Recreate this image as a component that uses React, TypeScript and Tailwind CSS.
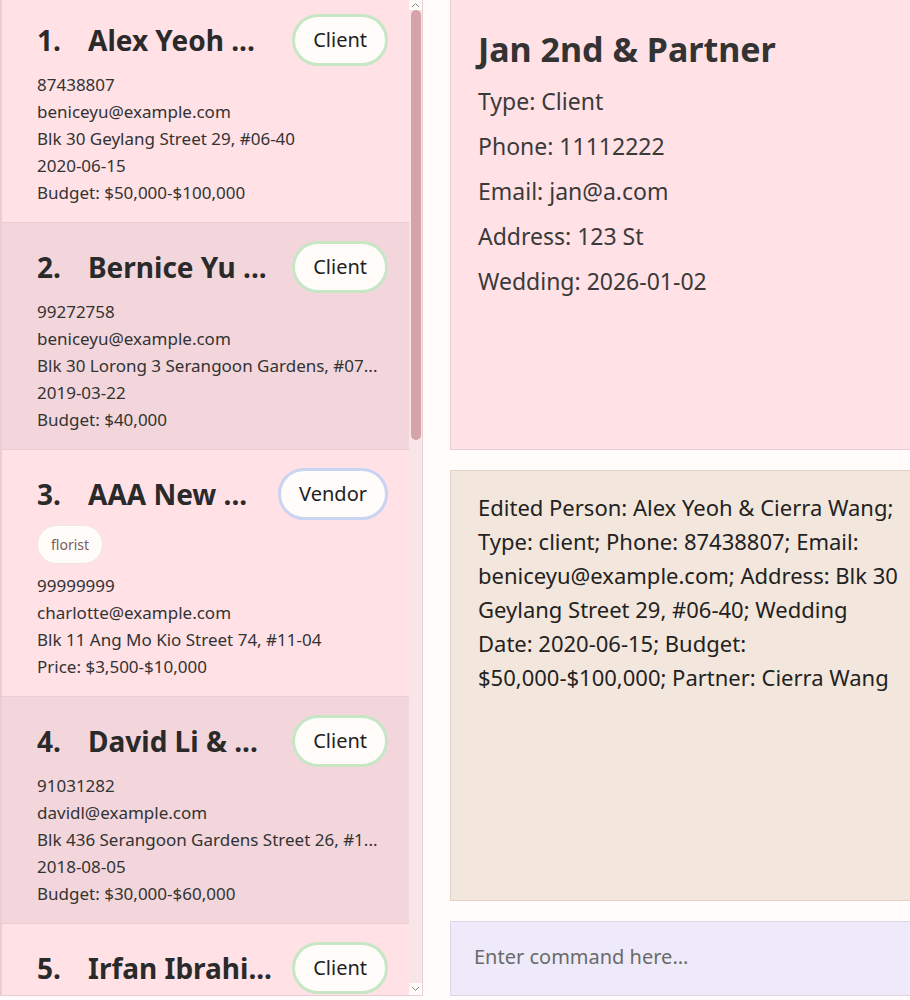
import React from "react";

type Person = {
  idx: number;
  name: string;
  type: "Client" | "Vendor";
  tags?: string[];
  lines: string[];
  alt?: boolean;
};

// card 5 is scrolled past the bottom edge, only its header shows
const people: Person[] = [
  {
    idx: 1,
    name: "Alex Yeoh ...",
    type: "Client",
    lines: ["87438807", "beniceyu@example.com", "Blk 30 Geylang Street 29, #06-40", "2020-06-15", "Budget: $50,000-$100,000"],
  },
  {
    idx: 2,
    name: "Bernice Yu ...",
    type: "Client",
    alt: true,
    lines: ["99272758", "beniceyu@example.com", "Blk 30 Lorong 3 Serangoon Gardens, #07...", "2019-03-22", "Budget: $40,000"],
  },
  {
    idx: 3,
    name: "AAA New ...",
    type: "Vendor",
    tags: ["florist"],
    lines: ["99999999", "charlotte@example.com", "Blk 11 Ang Mo Kio Street 74, #11-04", "Price: $3,500-$10,000"],
  },
  {
    idx: 4,
    name: "David Li & ...",
    type: "Client",
    alt: true,
    lines: ["91031282", "davidl@example.com", "Blk 436 Serangoon Gardens Street 26, #1...", "2018-08-05", "Budget: $30,000-$60,000"],
  },
  {
    idx: 5,
    name: "Irfan Ibrahi...",
    type: "Client",
    lines: [],
  },
];

const font = "font-['Noto_Sans',sans-serif]";

// ─── List card ────────────────────────────────────────────────────────────────

const TypeBadge: React.FC<{ type: Person["type"] }> = ({ type }) => {
  const border = type === "Client" ? "border-[#c6e6c6]" : "border-[#c9d3f2]";
  return (
    <span
      className={`shrink-0 inline-flex items-center justify-center h-[52px] px-[18px] rounded-full border-[3px] bg-[#fffcfa] text-[20px] text-[#222] ${border}`}
    >
      {type}
    </span>
  );
};

const PersonCard: React.FC<{ p: Person }> = ({ p }) => (
  <div
    className={`border-b border-[#ebcdd2] pl-[35px] pr-[21px] pt-[18px] pb-[16px] ${p.alt ? "bg-[#f2d6db]" : "bg-[#ffe1e6]"}`}
  >
    <div className="flex items-center justify-between h-[52px]">
      <div className="flex items-center text-[28px] font-bold text-[#2a2a2a] whitespace-nowrap">
        <span className="w-[51px]">{p.idx}.</span>
        <span>{p.name}</span>
      </div>
      <TypeBadge type={p.type} />
    </div>
    {p.tags && (
      <div className="flex gap-2 mt-[5px] mb-[8px]">
        {p.tags.map((t) => (
          <span
            key={t}
            className="inline-flex items-center h-[39px] px-[13px] rounded-full bg-[#fffcfa] border border-[#eee6e6] text-[14px] text-[#7a5c5c]"
          >
            {t}
          </span>
        ))}
      </div>
    )}
    {p.lines.length > 0 && (
      <div className="mt-[5px] flex flex-col text-[17px] leading-[27px] text-[#333]">
        {p.lines.map((l, i) => (
          <span key={i} className="whitespace-nowrap">
            {l}
          </span>
        ))}
      </div>
    )}
  </div>
);

// ─── Scrollbar (static drawing of the list's scroll state) ───────────────────

const FakeScrollbar: React.FC = () => (
  <div className="w-[13px] shrink-0 flex flex-col items-center bg-[#f8e5e8]">
    <div className="h-[10px] w-full bg-[#fffcfa] flex items-start justify-center text-[#888]">
      <svg width="9" height="6" viewBox="0 0 9 6" className="mt-[2px]">
        <path d="M1 5 L4.5 1.5 L8 5" fill="none" stroke="currentColor" strokeWidth="1" />
      </svg>
    </div>
    <div className="w-[10px] h-[430px] rounded-full bg-[#d5a4a8]" />
    <div className="flex-1 w-[10px] rounded-b-full" />
    <div className="h-[12px] w-full bg-[#fffcfa] flex items-center justify-center text-[#888]">
      <svg width="9" height="6" viewBox="0 0 9 6">
        <path d="M1 1 L4.5 4.5 L8 1" fill="none" stroke="currentColor" strokeWidth="1" />
      </svg>
    </div>
  </div>
);

// ─── App ──────────────────────────────────────────────────────────────────────

export default function App() {
  return (
    <div className={`w-[910px] h-[1000px] bg-[#fffcfb] flex ${font}`}>
      {/* Person list */}
      <div className="w-[423px] h-[996px] shrink-0 flex border-l-2 border-b border-r border-[#e9cfd3] overflow-hidden">
        <div className="flex-1 overflow-hidden">
          <div className="-mt-[4px]">
            {people.map((p) => (
              <PersonCard key={p.idx} p={p} />
            ))}
          </div>
        </div>
        <FakeScrollbar />
      </div>

      {/* Right column */}
      <div className="flex-1 flex flex-col pl-[27px]">
        <div className="h-[450px] bg-[#ffe1e6] border-l border-b border-[#e8cdd1] pl-[27px] pt-[26px] text-[#3a3a3a]">
          <h1 className="text-[34px] font-bold leading-[46px] text-[#333]">Jan 2nd &amp; Partner</h1>
          <div className="mt-[7px] flex flex-col text-[23px] leading-[45px]">
            <span>Type: Client</span>
            <span>Phone: 11112222</span>
            <span>Email: jan@a.com</span>
            <span>Address: 123 St</span>
            <span>Wedding: 2026-01-02</span>
          </div>
        </div>

        <div className="mt-[20px] h-[431px] bg-[#f3e6dc] border border-r-0 border-[#e2d2c6] pl-[27px] pr-[6px] pt-[19px] text-[22px] leading-[34px] text-[#222]">
          Edited Person: Alex Yeoh &amp; Cierra Wang; Type: client; Phone: 87438807; Email: beniceyu@example.com;
          Address: Blk 30 Geylang Street 29, #06-40; Wedding Date: 2020-06-15; Budget: $50,000-$100,000; Partner:
          Cierra Wang
        </div>

        <div className="mt-[20px] h-[75px] bg-[#eeeafa] border border-r-0 border-[#dcd6e8] flex items-center pl-[23px]">
          <input
            className="w-full bg-transparent outline-none text-[20px] text-[#333] placeholder:text-[#6a6a6a] -mt-[4px]"
            placeholder="Enter command here..."
          />
        </div>
      </div>
    </div>
  );
}
